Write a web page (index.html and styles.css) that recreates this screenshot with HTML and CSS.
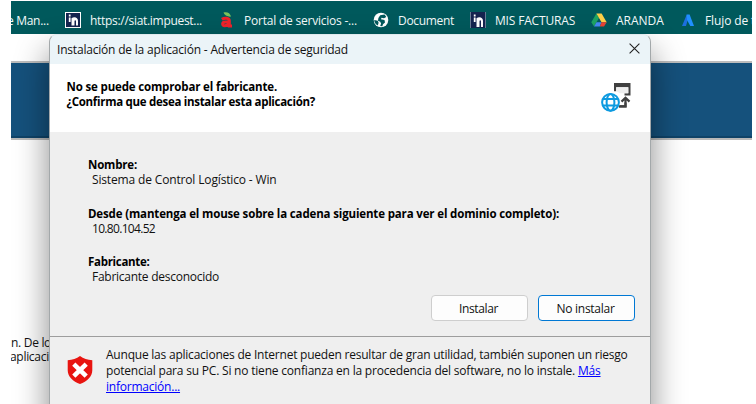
FILE: index.html
```html
<!DOCTYPE html>
<html lang="es">
<head>
<meta charset="utf-8">
<title>Instalación de la aplicación</title>
<link rel="stylesheet" href="styles.css">
</head>
<body>
<div class="browser">
  <nav class="bookmarks">
    <span class="bm bm-man">e Man...</span>
    <span class="bm bm-siat">
      <svg class="ico" viewBox="0 0 16 16"><path fill="#fff" d="M0 0h16v16H0z"/><path fill="#14234f" d="M1 1h14v14H1z"/><path fill="#fff" d="M3.800 2.600h1.800v1.800H3.800zM3.800 5.600h1.800V10H3.800zM6.500 6.300C9 4.400 13 5 13 9v4.500h-2V9.200c0-1.400-1.500-1.400-1.500 0v4.300H6.500z"/></svg>
      <span>https://siat.impuest...</span>
    </span>
    <span class="bm bm-portal">
      <svg class="ico" viewBox="0 0 16 16"><path fill="#7cc35a" d="M4.500.6C8-.4 11 .8 12 4.600 8.500 4.900 5.500 3.600 4.500.6z"/><path fill="none" stroke="#f0222a" stroke-width="3" d="M2.800 7.200C5.500 5.600 10.300 5.700 10.300 8.700v6.500M10.300 10.100H6.500c-3.700 0-3.700 3.700-.8 3.700 2.200 0 3.600-.8 4.600-2M9 14h4"/></svg>
      <span>Portal de servicios -...</span>
    </span>
    <span class="bm bm-doc">
      <svg class="ico" viewBox="0 0 16 16"><circle cx="8" cy="8" r="7.300" fill="#fff"/><path fill="#00595c" d="M7.200 3.200 11.600 2.600 13.300 5 11 6.200 8.600 5.800 7.900 7.300 11.500 8.100 12 10.500 10 12.200 9.300 14.300 7.200 13.900 8.100 11.400 7.200 9.700 5 8.700 5.400 6zM1.200 8 4.800 8.800 5.600 10.800 4.800 13.600C2.600 12.500 1.300 10.500 1.200 8z"/></svg>
      <span>Document</span>
    </span>
    <span class="bm bm-mis">
      <svg class="ico" viewBox="0 0 16 16"><path fill="#6a7b95" d="M0 0h16v16H0z"/><path fill="#14234f" d="M1 0h14v16H1z"/><path fill="#fff" d="M3.800 2.600h1.800v1.800H3.800zM3.800 5.600h1.800V10H3.800zM6.500 6.300C9 4.400 13 5 13 9v6h-2V9.200c0-1.400-1.500-1.400-1.500 0V15H6.500z"/></svg>
      <span>MIS FACTURAS</span>
    </span>
    <span class="bm bm-aranda">
      <svg class="ico" viewBox="0 0 16 16"><path fill="#1ea362" d="M5.400 1.500 8 6 3 14.500.3 10.200z"/><path fill="#ffcf48" d="M5.400 1.500h5.200l5.100 8.800h-5.200z"/><path fill="#4688f4" d="M5.500 10.200h5L8.800 14.500H3z"/><path fill="#ea4335" d="M10.500 10.200h5.200L13 14.500H8.800z"/></svg>
      <span>ARANDA</span>
    </span>
    <span class="bm bm-flujo">
      <svg class="ico" viewBox="0 0 16 16"><path fill="#1d6fe0" d="M6.800 2.500 7.700 8 6 14H2z"/><path fill="#2090ff" d="M6.600 2.500h3L14 14h-3.700L7 8z"/></svg>
      <span>Flujo de t</span>
    </span>
  </nav>
  <div class="toolbar"></div>
  <div class="banner"></div>
  <main class="page">
    <p class="page-text">n. De lo<br><span>aplicaci</span></p>
  </main>

  <section class="dialog">
    <header class="titlebar">
      <span>Instalación de la aplicación - Advertencia de seguridad</span>
      <svg class="close" viewBox="0 0 11 11"><path d="m.6.6 9.800 9.800M10.400.6.6 10.400"/></svg>
    </header>
    <div class="question">
      <div class="question-text">
        <div class="q1">No se puede comprobar el fabricante.</div>
        <div class="q2">¿Confirma que desea instalar esta aplicación?</div>
      </div>
      <svg class="globe" viewBox="0 0 30 30">
        <path fill="#404040" d="M13 0h16.500v12.500h-6v-2.200h3.800V4.200H15.200v4H13z"/><path fill="#eee" d="M15.200 4.200h12.100v6.100H19l-3.800-2z"/>
        <path fill="none" stroke="#404040" stroke-width="2.200" d="M17.500 23.400h7v-7.500M20.500 18.600l4-3.900 4 3.900"/>
        <circle cx="9.500" cy="19.300" r="10" fill="#fff"/>
        <path fill="none" stroke="#404040" stroke-width="2.200" d="M18 23.400h6.500v-4"/>
        <g fill="none" stroke="#0d9ae0" stroke-width="2"><circle cx="9.500" cy="19.300" r="8.400"/><ellipse cx="9.500" cy="19.300" rx="3.900" ry="8.400"/><path d="M2 16h15M2 22.600h15"/></g>
      </svg>
    </div>
    <div class="details">
      <dl>
        <dt class="n1">Nombre:</dt><dd class="v1">Sistema de Control Logístico - Win</dd>
        <dt class="n2">Desde (mantenga el mouse sobre la cadena siguiente para ver el dominio completo):</dt><dd class="v2">10.80.104.52</dd>
        <dt class="n3">Fabricante:</dt><dd class="v3">Fabricante desconocido</dd>
      </dl>
      <div class="actions">
        <button class="install">Instalar</button>
        <button class="cancel">No instalar</button>
      </div>
    </div>
    <footer class="warning">
      <svg class="shield" viewBox="0 0 26 28"><path fill="#e81410" d="M13 0c3.500 2.600 7.500 4 12.300 4.300v10C25.300 20.500 20 25.500 13 28 6 25.500.7 20.500.7 14.300v-10C5.500 4 9.500 2.600 13 0z"/><path stroke="#fff" stroke-width="4.600" d="m6.800 8.200 12.400 12M19.200 8.200l-12.400 12"/></svg>
      <p>Aunque las aplicaciones de Internet pueden resultar de gran utilidad, también suponen un riesgo<br>
      <span class="w2">potencial para su PC. Si no tiene confianza en la procedencia del software, no lo instale. <a>Más</a></span><br>
      <a>información...</a></p>
    </footer>
  </section>
</div>
</body>
</html>
```
FILE: styles.css
```css
* { box-sizing: border-box; }
body {
  margin: 0;
  background: #fff;
  font: 12px/15px "Open Sans", "Noto Sans", sans-serif;
  color: #111;
}
.browser {
  position: relative;
  width: 741px;
  height: 403px;
  margin: 1px 4px 0 11px;
  overflow: hidden;
  white-space: nowrap;
}
.bookmarks {
  display: flex;
  height: 33px;
  padding-top: 3px;
  background: #00595c;
  color: #f4fafa;
}
.bm { display: flex; align-items: center; height: 32px; flex: none; }
.ico { width: 16px; height: 16px; margin-right: 9px; flex: none; }
.bm-man { width: 54px; letter-spacing: -.3px; text-indent: -4px; }
.bm-siat { width: 154px; letter-spacing: -.3px; }
.bm-portal { width: 154px; letter-spacing: -.22px; }
.bm-doc { width: 97px; letter-spacing: -.31px; }
.bm-mis { width: 121px; letter-spacing: -.17px; }
.bm-aranda { width: 89px; }
.bm-flujo { letter-spacing: -.12px; }
.toolbar {
  height: 29px;
  background: #fff;
  border-bottom: 2px solid #bdbdbd;
}
.banner { height: 75px; background: #15517c; border-bottom: 2px solid #0f4368; }
.page {
  height: 266px;
  padding-top: 196px;
  border-top: 2px solid #b9b9b9;
  background: #fff;
}
.page-text { margin: 0; line-height: 14px; letter-spacing: -.3px; }
.page-text span { margin-left: -1px; }

.dialog {
  position: absolute;
  left: 38px;
  top: 33px;
  width: 602px;
  height: 410px;
  border: 1px solid #a3a8aa;
  border-top-color: #dfe9ed;
  border-radius: 8px 8px 0 0;
  background: #efefef;
  box-shadow: 0 18px 32px 2px rgba(0, 0, 0, .42);
  overflow: hidden;
}
.titlebar {
  display: flex;
  justify-content: space-between;
  align-items: center;
  height: 29px;
  padding: 0 10px 0 7px;
  background: #ebf4f8;
  letter-spacing: -.197px;
}
.titlebar span { margin-top: -1px; }
.close { width: 11px; height: 11px; margin-top: -2px; fill: none; stroke: #222; stroke-width: 1.1; }
.question {
  display: flex;
  justify-content: space-between;
  height: 68px;
  padding: 15px 19px 0 16.500px;
  background: #fff;
}
.question-text, dt { font-size: 11.5px; font-weight: 700; color: #000; }
.q1 { letter-spacing: -.157px; }
.q2 { letter-spacing: -.29px; }
.globe { width: 30px; height: 30px; margin-top: 4px; }
.details { height: 205px; padding: 25px 15px 0 38px; border-bottom: 1px solid #9d9d9d; }
dl { margin: 0; height: 138px; }
dt { height: 15px; }
dd { margin: 0 0 18.500px 4px; height: 15px; }
.n1 { letter-spacing: -.19px; }
.n2 { letter-spacing: -.148px; }
.n3 { letter-spacing: -.3px; }
.v1 { letter-spacing: -.153px; }
.v2 { letter-spacing: -.68px; }
.v3 { letter-spacing: -.26px; }
.actions { display: flex; justify-content: flex-end; gap: 10px; }
button {
  width: 97px;
  height: 26px;
  padding: 0 2px 0 0;
  border: 1px solid #cecece;
  border-radius: 4px;
  background: #fdfdfd;
  font: inherit;
  color: #111;
}
.install { letter-spacing: -.375px; }
.cancel { letter-spacing: -.27px; border-color: #0078d4; }
.warning { display: flex; padding: 10px 0 0 17px; }
.shield { width: 26px; height: 28px; margin: 9px 13px 0 0; flex: none; }
.warning p { margin: 0; line-height: 16px; letter-spacing: -.223px; }
.w2 { letter-spacing: -.203px; }
a { color: #00f; text-decoration: underline; }
```
